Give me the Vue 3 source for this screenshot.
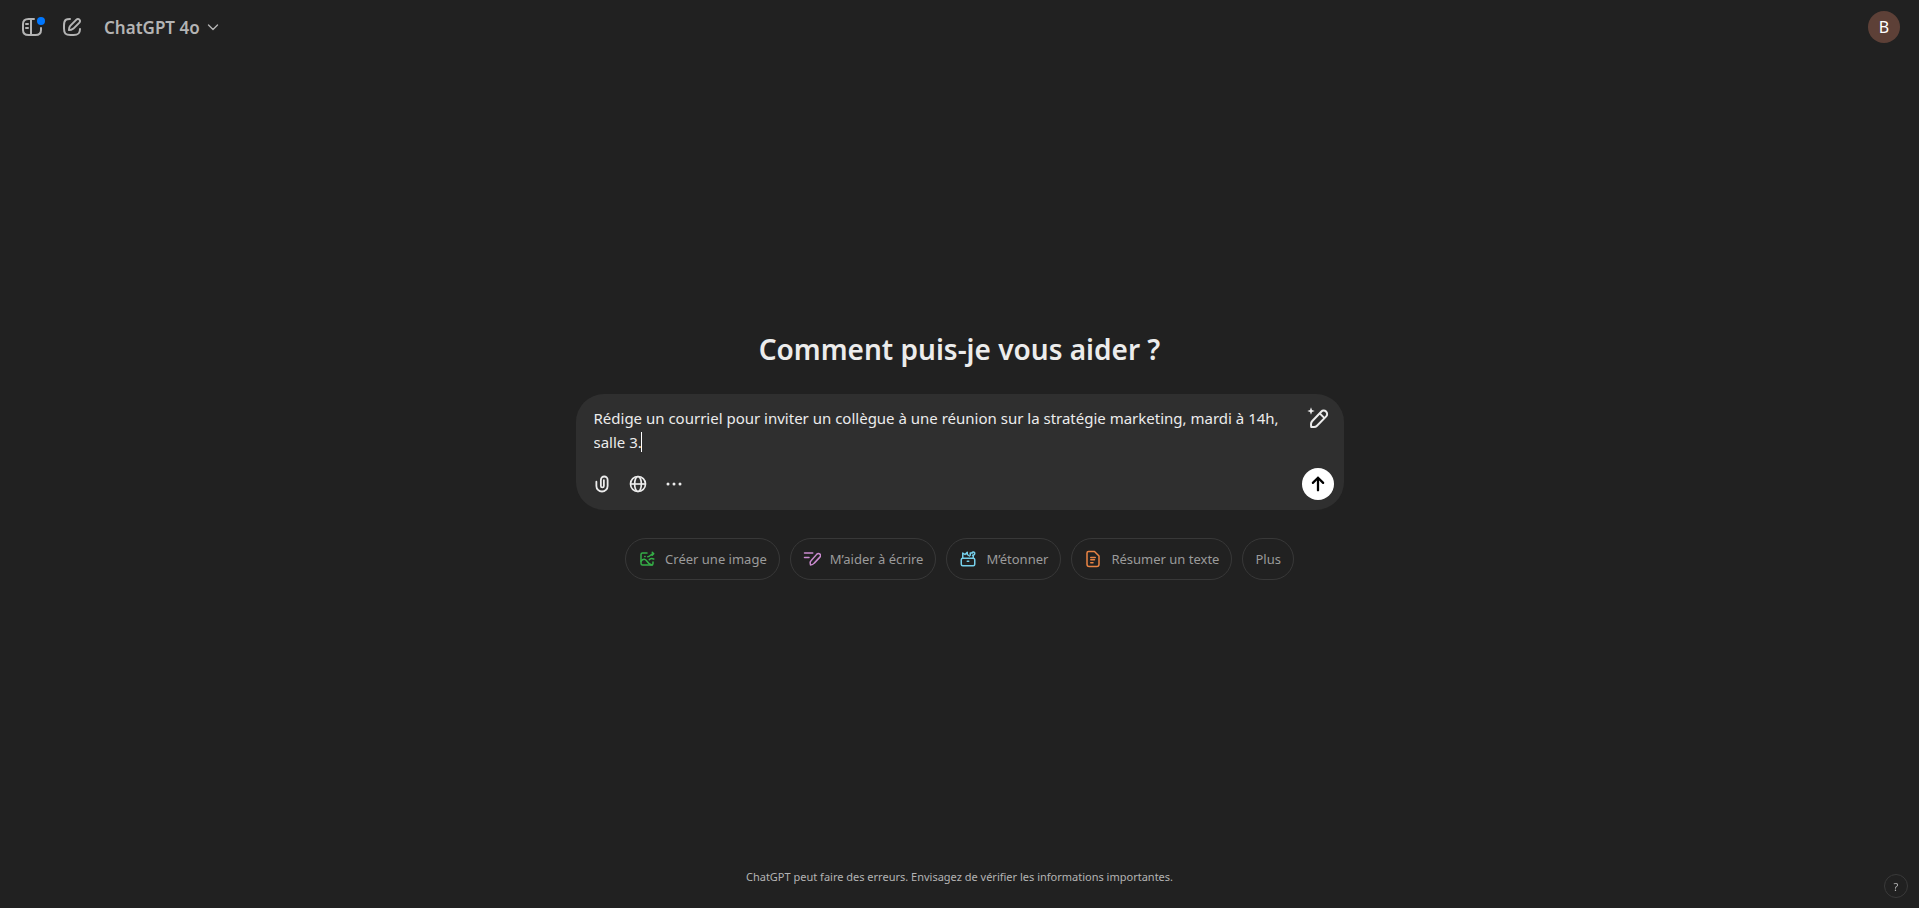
<template>
  <div class="page">
    <header class="topbar">
      <div class="topbar-left">
        <button class="icon-btn" type="button" aria-label="Ouvrir la barre latérale">
          <svg width="24" height="24" viewBox="0 0 24 24" fill="none" stroke="currentColor" stroke-width="2">
            <path d="M14 4H8.500C5 4 3 5.500 3 9V15C3 18.500 5 20 8.500 20H15.500C19 20 21 18.500 21 15V13" stroke-linecap="round" />
            <path d="M11 4V20" />
            <path d="M6 9H8M6 13H8" stroke-linecap="round" />
          </svg>
          <span class="dot"></span>
        </button>
        <button class="icon-btn" type="button" aria-label="Nouveau chat">
          <svg width="24" height="24" viewBox="0 0 24 24" fill="none" stroke="currentColor" stroke-width="2" stroke-linecap="round" stroke-linejoin="round">
            <path d="M10 4C6.500 4 4 4.200 4 10.400V13.600C4 18.500 5.500 20 10.400 20H13.600C18.500 20 20 18.500 20 14" />
            <path d="M16.400 4.600A2.120 2.120 0 0 1 19.400 7.600L13.400 13.600Q12.500 14.400 11.200 14.700L9 15L9.300 12.800Q9.600 11.400 10.400 10.600Z" />
          </svg>
        </button>
        <button class="model-btn" type="button">
          <span>ChatGPT 4o</span>
          <svg width="16" height="16" viewBox="0 0 16 16" fill="none" stroke="currentColor" stroke-width="1.4" stroke-linecap="round" stroke-linejoin="round">
            <path d="M3.500 6L8 10.500L12.500 6" />
          </svg>
        </button>
      </div>
      <button class="avatar" type="button" aria-label="Profil">B</button>
    </header>

    <main class="content">
      <h1>Comment puis-je vous aider ?</h1>

      <form class="composer" @submit.prevent>
        <div class="prompt-row">
          <div class="prompt-box">
            <textarea v-model="prompt" rows="2" aria-label="Message" spellcheck="false"></textarea>
            <span class="caret"></span>
          </div>
          <button class="canvas-btn" type="button" aria-label="Modifier">
            <svg width="24" height="24" viewBox="0 0 24 24" fill="none" stroke="currentColor" stroke-width="2" stroke-linejoin="round">
              <path d="M5.200 21L5 18.300Q5 16.400 6.300 15L15.200 5.700A3.300 3.300 0 0 1 20.200 10.400L11 19.700Q9.800 21 8 21Z" />
              <path d="M13.700 7.400L18.500 12.100" />
              <path d="M5 1.200L6 4L8.700 5L6 6L5 8.800L4 6L1.300 5L4 4Z" fill="currentColor" stroke="none" />
            </svg>
          </button>
        </div>

        <div class="tools">
          <div class="tools-left">
            <button class="tool" type="button" aria-label="Joindre un fichier">
              <svg width="18" height="18" viewBox="0 0 24 24" fill="none" stroke="currentColor" stroke-width="2.400" stroke-linecap="round">
                <path d="M4.500 9V14.500A7.500 7.500 0 0 0 19.500 14.500V6.500A4.500 4.500 0 0 0 10.500 6.500V14.500A2 2 0 0 0 14.500 14.500V7" />
              </svg>
            </button>
            <button class="tool" type="button" aria-label="Rechercher sur le Web">
              <svg width="18" height="18" viewBox="0 0 24 24" fill="none" stroke="currentColor" stroke-width="2.200">
                <circle cx="12" cy="12" r="10" />
                <ellipse cx="12" cy="12" rx="4.500" ry="10" />
                <path d="M2 12H22" />
              </svg>
            </button>
            <button class="tool" type="button" aria-label="Afficher les outils">
              <svg width="18" height="18" viewBox="0 0 24 24" fill="currentColor">
                <circle cx="4" cy="12" r="2" />
                <circle cx="12" cy="12" r="2" />
                <circle cx="20" cy="12" r="2" />
              </svg>
            </button>
          </div>
          <button class="send" type="submit" aria-label="Envoyer">
            <svg width="32" height="32" viewBox="0 0 32 32" fill="currentColor">
              <path d="M15.192 8.906C15.638 8.460 16.362 8.460 16.808 8.906L21.951 14.049C22.397 14.495 22.397 15.219 21.951 15.665C21.505 16.112 20.781 16.112 20.335 15.665L17.143 12.473V22.286C17.143 22.917 16.631 23.429 16 23.429C15.369 23.429 14.857 22.917 14.857 22.286V12.473L11.665 15.665C11.219 16.112 10.495 16.112 10.049 15.665C9.603 15.219 9.603 14.495 10.049 14.049Z" />
            </svg>
          </button>
        </div>
      </form>

      <div class="suggestions">
        <button v-for="item in suggestions" :key="item.label" class="chip" type="button">
          <svg
            v-if="item.icon"
            :class="item.icon"
            width="18"
            height="18"
            viewBox="0 0 24 24"
            fill="none"
            stroke="currentColor"
            stroke-width="2"
            stroke-linecap="round"
            stroke-linejoin="round"
          >
            <path v-for="d in icons[item.icon]" :key="d" :d="d" />
          </svg>
          <span>{{ item.label }}</span>
        </button>
      </div>
    </main>

    <footer class="footer">
      ChatGPT peut faire des erreurs. Envisagez de vérifier les informations importantes.
    </footer>
    <button class="help" type="button" aria-label="Aide">?</button>
  </div>
</template>

<script setup>
import { ref } from 'vue';

const prompt = ref(
  'Rédige un courriel pour inviter un collègue à une réunion sur la stratégie marketing, mardi à 14h, salle 3.'
);

const suggestions = [
  { label: 'Créer une image', icon: 'image' },
  { label: 'M’aider à écrire', icon: 'write' },
  { label: 'M’étonner', icon: 'surprise' },
  { label: 'Résumer un texte', icon: 'summary' },
  { label: 'Plus' }
];

const icons = {
  image: [
    'M12 4H6Q4 4 4 6V18Q4 20 6 20H18Q20 20 20 18V16',
    'M4 15C7 11 10 12 12 15S16 20 19 20',
    'M9 8.500H9.500',
    'M13 9C17 9 16 5 21 5M19 3L21 5L19 7',
    'M15 13C17 10 18 11 21 12'
  ],
  write: [
    'M2 4H13',
    'M2 10H8',
    'M10 20L9.500 17Q9.500 15.500 11 14L18.500 5.500A2.700 2.700 0 0 1 22.500 9.500L15 17.500Q13 20 10 20Z'
  ],
  surprise: [
    'M5 11H19Q21 11 21 13V19Q21 21 19 21H5Q3 21 3 19V13Q3 11 5 11Z',
    'M11 15H13',
    'M5 11V4L8 6L11 3V6L14 8',
    'M15 7V4H18M17 4Q19 1 21 4Q21 7 18 7M19 8V11'
  ],
  summary: [
    'M6 2H14L20 8V19Q20 22 17 22H7Q4 22 4 19V4Q4 2 6 2Z',
    'M9 10H15',
    'M9 13H14',
    'M9 17H12'
  ]
};
</script>

<style>
body {
  margin: 0;
  background: #212121;
}
</style>

<style scoped>
.page {
  min-height: 100vh;
  display: flex;
  flex-direction: column;
  background: #212121;
  color: #ececec;
  font-family: 'Segoe UI', 'Noto Sans', sans-serif;
}

button {
  display: flex;
  align-items: center;
  justify-content: center;
  padding: 0;
  border: none;
  background: none;
  color: inherit;
  font-family: inherit;
  cursor: pointer;
}

svg {
  display: block;
  flex: none;
}

.topbar {
  height: 54px;
  padding: 0 19px 0 12px;
  display: flex;
  align-items: center;
  justify-content: space-between;
}

.topbar-left {
  display: flex;
  align-items: center;
  color: #b4b4b4;
}

.icon-btn {
  position: relative;
  width: 40px;
  height: 40px;
}

.dot {
  position: absolute;
  top: 10px;
  right: 7px;
  width: 8px;
  height: 8px;
  border-radius: 50%;
  background: #0077ff;
}

.model-btn {
  height: 36px;
  padding: 0 12px;
  gap: 5px;
  font-size: 17px;
  font-weight: 600;
}

.avatar {
  width: 32px;
  height: 32px;
  border-radius: 50%;
  background: #5d4037;
  color: #fff;
  font-size: 16px;
}

.content {
  flex: 1;
  display: flex;
  flex-direction: column;
  align-items: center;
  justify-content: center;
}

h1 {
  margin: 0 0 28px;
  font-size: 28px;
  line-height: 34px;
  font-weight: 600;
}

.composer {
  box-sizing: border-box;
  width: 100%;
  max-width: 768px;
  padding: 12px 10px 10px 8px;
  border-radius: 28px;
  background: #2f2f2f;
}

.prompt-row {
  display: flex;
  align-items: flex-start;
  padding: 0 4px 0 10px;
}

.prompt-box {
  position: relative;
  flex: 1;
  height: 48px;
}

textarea {
  display: block;
  width: 100%;
  height: 48px;
  padding: 0;
  border: none;
  outline: none;
  resize: none;
  overflow: hidden;
  background: none;
  color: #ececec;
  font-family: inherit;
  font-size: 15px;
  line-height: 24px;
}

.caret {
  position: absolute;
  left: 47px;
  top: 26px;
  width: 1px;
  height: 20px;
  background: #fff;
}

.canvas-btn {
  width: 24px;
  height: 24px;
}

.tools {
  margin-top: 14px;
  display: flex;
  align-items: center;
  justify-content: space-between;
}

.tools-left {
  display: flex;
}

.tool {
  width: 36px;
  height: 32px;
}

.send {
  width: 32px;
  height: 32px;
  border-radius: 50%;
  background: #fff;
  color: #000;
}

.suggestions {
  margin-top: 28px;
  display: flex;
  flex-wrap: wrap;
  justify-content: center;
  gap: 10px;
}

.chip {
  height: 42px;
  padding: 0 12px;
  gap: 9px;
  border: 1px solid #383838;
  border-radius: 21px;
  color: #9b9b9b;
  font-size: 13px;
}

.image {
  color: #35ae47;
}

.write {
  color: #cb8bd0;
}

.surprise {
  color: #76d0eb;
}

.summary {
  color: #ea8444;
}

.footer {
  padding: 11px 16px 23px;
  color: #b4b4b4;
  font-size: 11px;
  line-height: 16px;
  text-align: center;
}

.help {
  position: fixed;
  right: 11px;
  bottom: 10px;
  width: 24px;
  height: 24px;
  border: 1px solid #3a3a3a;
  border-radius: 50%;
  color: #b4b4b4;
  font-size: 11px;
}
</style>
